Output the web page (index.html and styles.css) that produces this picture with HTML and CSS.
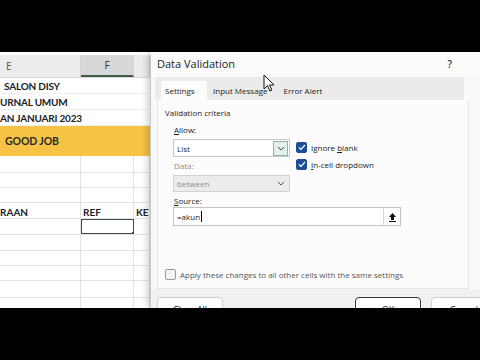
FILE: index.html
```html
<!DOCTYPE html>
<html lang="en">
<head>
    <meta charset="UTF-8">
    <title>Data Validation</title>
    <link rel="stylesheet" href="styles.css">
</head>
<body>
    <div class="screen">
        <div class="bar"></div>
        <div class="main">
            <div class="sheet">
                <div class="sheet-gap"></div>
                <div class="col-head">
                    <div class="ch ch-e">E</div>
                    <div class="ch ch-sel">F</div>
                    <div class="ch"></div>
                </div>
                <div class="trow"><span class="t t-first">SALON DISY</span></div>
                <div class="trow"><span class="t">URNAL UMUM</span></div>
                <div class="trow"><span class="t">AN JANUARI 2023</span></div>
                <div class="band"><span>GOOD JOB</span></div>
                <div class="grow h17"><div class="c"></div><div class="c"></div><div class="c"></div></div>
                <div class="grow h15"><div class="c"></div><div class="c"></div><div class="c"></div></div>
                <div class="grow h15"><div class="c"></div><div class="c"></div><div class="c"></div></div>
                <div class="grow h16 head"><div class="c">RAAN</div><div class="c">REF</div><div class="c">KET</div></div>
                <div class="grow h16"><div class="c"></div><div class="c sel"></div><div class="c"></div></div>
                <div class="grow h16"><div class="c"></div><div class="c"></div><div class="c"></div></div>
                <div class="grow h15"><div class="c"></div><div class="c"></div><div class="c"></div></div>
                <div class="grow h15"><div class="c"></div><div class="c"></div><div class="c"></div></div>
                <div class="grow h17"><div class="c"></div><div class="c"></div><div class="c"></div></div>
                <div class="grow h15"><div class="c"></div><div class="c"></div><div class="c"></div></div>
            </div>

            <div class="dialog">
                <div class="dlg-title">
                    <span>Data Validation</span>
                    <span class="help">?</span>
                </div>
                <div class="tabs">
                    <span class="tab on">Settings</span>
                    <span class="tab">Input Message</span>
                    <span class="tab">Error Alert</span>
                </div>
                <div class="panel">
                    <div class="crit">Validation criteria</div>
                    <div class="crit-body">
                        <div class="crit-left">
                            <div class="lbl"><u>A</u>llow:</div>
                            <div class="combo">
                                <span>List</span>
                                <span class="drop drop-hot">
                                    <svg width="8" height="5" viewBox="0 0 8 5"><path d="M1 1l3 3 3-3" fill="none" stroke="#444" stroke-width="1"/></svg>
                                </span>
                            </div>
                            <div class="lbl lbl-dim">Data:</div>
                            <div class="combo combo-off">
                                <span>between</span>
                                <span class="drop">
                                    <svg width="8" height="5" viewBox="0 0 8 5"><path d="M1 1l3 3 3-3" fill="none" stroke="#555" stroke-width="1"/></svg>
                                </span>
                            </div>
                        </div>
                        <div class="crit-right">
                            <div class="chk">
                                <span class="box on"><svg width="8" height="7" viewBox="0 0 8 7"><path d="M1 3.5l2 2 4-4.5" fill="none" stroke="#fff" stroke-width="1.2"/></svg></span>
                                <span>Ignore <u>b</u>lank</span>
                            </div>
                            <div class="chk">
                                <span class="box on"><svg width="8" height="7" viewBox="0 0 8 7"><path d="M1 3.5l2 2 4-4.5" fill="none" stroke="#fff" stroke-width="1.2"/></svg></span>
                                <span><u>I</u>n-cell dropdown</span>
                            </div>
                        </div>
                    </div>
                    <div class="lbl src-lbl"><u>S</u>ource:</div>
                    <div class="src">
                        <span class="src-val">=akun<span class="caret"></span></span>
                        <span class="ref-btn">
                            <svg width="9" height="10" viewBox="0 0 9 10"><path d="M4.5 1L8 5H6v3H3V5H1z" fill="#111"/><path d="M1 9.5h7" stroke="#111" stroke-width="1"/></svg>
                        </span>
                    </div>
                    <div class="chk apply">
                        <span class="box"></span>
                        <span>Apply these changes to all other cells with the same settings</span>
                    </div>
                </div>
                <div class="btns">
                    <span class="btn btn-clear">Clear All</span>
                    <span class="btn btn-def">OK</span>
                    <span class="btn btn-cancel">Cancel</span>
                </div>
                <svg class="cursor" width="12" height="18" viewBox="0 0 12 18"><path d="M1 1v14l3.5-3.3 2.4 5.3 2-0.9-2.4-5.1H11z" fill="#fff" stroke="#111" stroke-width="1"/></svg>
            </div>
        </div>
        <div class="bar"></div>
    </div>
</body>
</html>
```

FILE: styles.css
```css
* {
    margin: 0;
    padding: 0;
    box-sizing: border-box;
}

body {
    background: #000;
    width: 480px;
    height: 360px;
    overflow: hidden;
}

.screen {
    display: flex;
    flex-direction: column;
    height: 360px;
}

.bar {
    height: 52px;
    background: #000;
    flex: none;
}

.main {
    height: 256px;
    display: flex;
    overflow: hidden;
    background: #fff;
}

/* spreadsheet */
.sheet {
    width: 150px;
    flex: none;
    overflow: hidden;
    font-family: Lato, "Liberation Sans", sans-serif;
    font-weight: 700;
    color: #222;
}

.sheet-gap {
    height: 3px;
    background: #fff;
}

.col-head {
    height: 23px;
    display: grid;
    grid-template-columns: 81px 53px 1fr;
    background: #ececec;
    border-bottom: 1px solid #d6d6d6;
    font-family: "Open Sans", sans-serif;
    font-weight: 400;
    font-size: 10px;
    color: #555;
}

.ch {
    display: flex;
    align-items: center;
    justify-content: center;
    border-right: 1px solid #d6d6d6;
}

.ch-e {
    justify-content: flex-start;
    padding-left: 6px;
}

.ch-sel {
    background: #d8d8d8;
    border-bottom: 2px solid #3d5d48;
    color: #333;
}

.trow {
    height: 16px;
    display: flex;
    align-items: center;
    font-size: 10px;
    letter-spacing: -0.2px;
    white-space: nowrap;
    border-bottom: 1px solid #f0f0f0;
}

.t-first {
    padding-left: 4px;
}

.band {
    height: 30px;
    background: #f6c346;
    display: flex;
    align-items: center;
    padding-left: 5px;
    font-size: 10.5px;
    letter-spacing: -0.1px;
    color: #2a2a2a;
}

.grow {
    display: grid;
    grid-template-columns: 81px 53px 1fr;
    border-bottom: 1px solid #e3e3e3;
    font-size: 10px;
}

.h15 { height: 15px; }
.h16 { height: 16px; }
.h17 { height: 17px; }

.c {
    border-right: 1px solid #e3e3e3;
    white-space: nowrap;
    overflow: hidden;
    display: flex;
    align-items: flex-end;
    padding-left: 2px;
}

.grow.head .c:first-child {
    padding-left: 0;
}

.sel {
    position: relative;
    border: 1.5px solid #3a4d40;
}

.sel::after {
    content: "";
    position: absolute;
    right: -3px;
    bottom: -3px;
    width: 4px;
    height: 4px;
    background: #3a4d40;
}

/* dialog */
.dialog {
    flex: 1;
    position: relative;
    background: #f9f9f9;
    border-left: 1px solid #c8c8c8;
    border-top-left-radius: 6px;
    box-shadow: -3px 0 6px rgba(0, 0, 0, 0.18);
    font-family: "Open Sans", sans-serif;
    font-size: 8px;
    color: #1b1b1b;
    display: flex;
    flex-direction: column;
}

.dlg-title {
    height: 25px;
    flex: none;
    display: flex;
    align-items: center;
    justify-content: space-between;
    padding: 0 28px 2px 6px;
    font-size: 11px;
    background: #fbfbfb;
}

.help {
    font-size: 10px;
    font-weight: 600;
    color: #333;
}

.tabs {
    height: 23px;
    flex: none;
    margin: 0 16px 0 4px;
    background: #ebebeb;
    display: flex;
    align-items: flex-end;
    padding-left: 6px;
}

.tab {
    height: 19px;
    display: flex;
    align-items: center;
    padding: 0 4px;
    color: #222;
}

.tab.on {
    background: #fcfcfc;
    width: 46px;
    margin-right: 2px;
}

.tab:last-child {
    margin-left: 8px;
}

.panel {
    flex: none;
    height: 189px;
    margin: 0 11px 0 6px;
    background: #fcfcfc;
    border: 1px solid #e6e6e6;
    border-top: none;
    padding: 0 0 0 7px;
}

.crit {
    margin-top: 6px;
    height: 14px;
    line-height: 14px;
}

.crit-body {
    display: flex;
    gap: 6px;
    margin-left: 8px;
}

.crit-left {
    width: 117px;
    flex: none;
}

.lbl {
    margin-top: 3px;
    height: 14px;
    line-height: 14px;
    padding-left: 1px;
}

.lbl-dim {
    margin-top: 2px;
    color: #8a8a8a;
}

.combo {
    margin-top: 2px;
    height: 18px;
    background: #fff;
    border: 1px solid #c9c9c9;
    display: flex;
    align-items: center;
    justify-content: space-between;
    padding-left: 3px;
}

.combo-off {
    height: 17px;
    background: #ececec;
    color: #8c8c8c;
    border-color: #d2d2d2;
}

.drop {
    width: 16px;
    height: 16px;
    display: flex;
    align-items: center;
    justify-content: center;
}

.drop-hot {
    background: #e3f0ee;
    border: 1px solid #8fb3b0;
    margin-right: 1px;
    height: 15px;
    width: 15px;
}

.crit-right {
    margin-top: 19px;
}

.chk {
    height: 17px;
    display: flex;
    align-items: center;
    gap: 4px;
}

.box {
    width: 11px;
    height: 11px;
    border-radius: 2px;
    border: 1px solid #9a9a9a;
    background: #f4f4f4;
    display: flex;
    align-items: center;
    justify-content: center;
    flex: none;
}

.box.on {
    background: #1e4f93;
    border-color: #1e4f93;
}

.src-lbl {
    margin: 3px 0 0 8px;
    height: 12px;
    line-height: 12px;
}

.src {
    margin-left: 8px;
    width: 228px;
    height: 19px;
    background: #fff;
    border: 1px solid #c4c4c4;
    display: flex;
    align-items: center;
    justify-content: space-between;
    padding-left: 3px;
}

.src-val {
    display: flex;
    align-items: center;
}

.caret {
    width: 1px;
    height: 11px;
    background: #000;
    margin-left: 0.5px;
}

.ref-btn {
    width: 17px;
    height: 17px;
    border-left: 1px solid #d6d6d6;
    display: flex;
    align-items: center;
    justify-content: center;
}

.apply {
    margin-top: 41px;
    height: 14px;
    color: #555;
}

.btns {
    display: flex;
    padding: 8px 0 0 6px;
    gap: 10px;
    background: #f1f1f1;
    flex: 1;
}

.btn {
    width: 66px;
    height: 24px;
    flex: none;
    border: 1px solid #cfcfcf;
    border-radius: 4px;
    background: #fdfdfd;
    display: flex;
    align-items: center;
    justify-content: center;
    font-size: 9px;
}

.btn-clear {
    margin-right: auto;
}

.btn-def {
    border: 1.5px solid #3a3a3a;
}

.btn-cancel {
    margin-right: -17px;
}

.cursor {
    position: absolute;
    left: 112px;
    top: 22px;
}
```
